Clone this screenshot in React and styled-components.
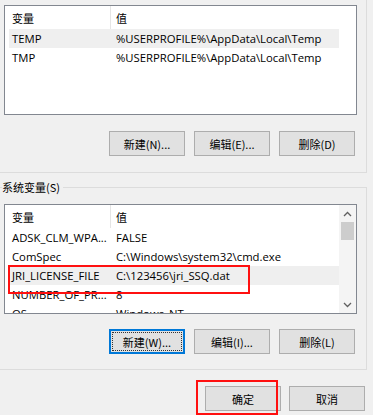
import React from "react";
import styled, { createGlobalStyle } from "styled-components";

const Global = createGlobalStyle`
  html, body { margin: 0; padding: 0; background: #f0f0f0; }
  body { overflow: hidden; }
`;

const cjk = '"Noto Sans CJK SC", sans-serif';

const Page = styled.div`
  position: relative;
  width: 373px;
  height: 415px;
  overflow: hidden;
  background: #f0f0f0;
  font-family: "Open Sans", "Noto Sans CJK SC", sans-serif;
  font-size: 11.3px;
  color: #000;
`;

const Group = styled.div`
  position: relative;
  box-sizing: border-box;
  width: 377px;
  margin-left: -10px;
  margin-top: ${(p) => p.$mt}px;
  padding: ${(p) => p.$pt}px 0 ${(p) => p.$pb}px 13px;
  border: 1px solid #dcdcdc;
`;

const GroupLabel = styled.div`
  position: absolute;
  left: 11px;
  top: -9px;
  padding-right: 3px;
  background: #f0f0f0;
  line-height: 16px;
  font-family: ${cjk};
  font-size: 11px;
`;

const ListBox = styled.div`
  position: relative;
  box-sizing: border-box;
  width: 353px;
  height: 110px;
  border: 1px solid #828790;
  background: #fff;
  padding: 0 0 0 4px;
  overflow: hidden;
  display: flex;
`;

const Rows = styled.div`
  width: 330px;
  display: flex;
  flex-direction: column;
`;

const Row = styled.div`
  display: flex;
  align-items: center;
  height: ${(p) => (p.$header ? 23 : 19)}px;
  background: ${(p) => (p.$sel ? "#efefef" : "transparent")};
  flex-shrink: 0;
  white-space: nowrap;
`;

const NameCell = styled.div`
  box-sizing: border-box;
  width: 102px;
  padding-left: 3px;
  align-self: stretch;
  display: flex;
  align-items: center;
  border-right: ${(p) => (p.$header ? "1px solid #e5e5e5" : "none")};
  font-family: ${(p) => (p.$header ? cjk : "inherit")};
  font-size: ${(p) => (p.$header ? "11px" : "inherit")};
`;

const ValueCell = styled.div`
  padding-left: 5px;
  font-family: ${(p) => (p.$header ? cjk : "inherit")};
  font-size: ${(p) => (p.$header ? "11px" : "inherit")};
`;

const ScrollTrack = styled.div`
  width: 17px;
  margin-left: auto;
  background: ${(p) => (p.$show ? "#f4f4f4" : "#fff")};
  display: flex;
  flex-direction: column;
  align-items: center;
`;

const Arrow = styled.div`
  height: 17px;
  width: 17px;
  display: flex;
  align-items: center;
  justify-content: center;
`;

const Thumb = styled.div`
  width: 13px;
  height: 18px;
  background: #cdcdcd;
`;

const Spacer = styled.div`
  flex: 1;
`;

const ButtonRow = styled.div`
  display: flex;
  gap: ${(p) => p.$gap}px;
  margin-top: ${(p) => p.$mt}px;
  padding-left: ${(p) => p.$pl}px;
`;

const Button = styled.div`
  position: relative;
  box-sizing: border-box;
  width: 76px;
  height: 25px;
  background: #e1e1e1;
  border: 1px solid ${(p) => (p.$focus ? "#0078d7" : "#adadad")};
  box-shadow: ${(p) => (p.$focus ? "inset 0 0 0 1px #0078d7" : "none")};
  display: flex;
  align-items: center;
  justify-content: center;
  font-family: ${cjk};
  font-size: 11px;
  &::after {
    content: "";
    display: ${(p) => (p.$focus ? "block" : "none")};
    position: absolute;
    inset: 2px;
    border: 1px dotted #333;
  }
`;

const Mark = styled.div`
  position: absolute;
  box-sizing: border-box;
  border: 2px solid #ff1010;
  pointer-events: none;
`;

const Chevron = ({ up }) => (
  <svg width="9" height="6" viewBox="0 0 9 6">
    <path
      d={up ? "M1 5 L4.5 1.5 L8 5" : "M1 1 L4.5 4.5 L8 1"}
      fill="none"
      stroke="#606060"
      strokeWidth="1.3"
    />
  </svg>
);

const userVars = [
  ["TEMP", "%USERPROFILE%\\AppData\\Local\\Temp", true],
  ["TMP", "%USERPROFILE%\\AppData\\Local\\Temp", false],
];

const sysVars = [
  ["ADSK_CLM_WPA...", "FALSE", false],
  ["ComSpec", "C:\\Windows\\system32\\cmd.exe", false],
  ["JRI_LICENSE_FILE", "C:\\123456\\jri_SSQ.dat", true],
  ["NUMBER_OF_PR...", "8", false],
  ["OS", "Windows_NT", false],
];

function VarList({ items, scroll }) {
  return (
    <ListBox>
      <Rows>
        <Row $header>
          <NameCell $header>变量</NameCell>
          <ValueCell $header>值</ValueCell>
        </Row>
        {items.map(([n, v, sel]) => (
          <Row key={n} $sel={sel}>
            <NameCell>{n}</NameCell>
            <ValueCell>{v}</ValueCell>
          </Row>
        ))}
      </Rows>
      <ScrollTrack $show={scroll}>
        {scroll && (
          <>
            <Arrow>
              <Chevron up />
            </Arrow>
            <Thumb />
            <Spacer />
            <Arrow>
              <Chevron />
            </Arrow>
          </>
        )}
      </ScrollTrack>
    </ListBox>
  );
}

export default function App() {
  return (
    <Page>
      <Global />
      <Group $mt={-20} $pt={24} $pb={16}>
        <VarList items={userVars} />
        <ButtonRow $mt={16} $pl={105} $gap={9}>
          <Button>新建(N)...</Button>
          <Button>编辑(E)...</Button>
          <Button>删除(D)</Button>
        </ButtonRow>
      </Group>
      <Group $mt={14} $pt={16} $pb={15}>
        <GroupLabel>系统变量(S)</GroupLabel>
        <VarList items={sysVars} scroll />
        <ButtonRow $mt={15} $pl={105} $gap={9}>
          <Button $focus>新建(W)...</Button>
          <Button>编辑(I)...</Button>
          <Button>删除(L)</Button>
        </ButtonRow>
      </Group>
      <ButtonRow $mt={16} $pl={205} $gap={8}>
        <Button>确定</Button>
        <Button>取消</Button>
      </ButtonRow>
      <Mark style={{ left: 8, top: 265, width: 242, height: 29 }} />
      <Mark style={{ left: 196, top: 380, width: 82, height: 35 }} />
    </Page>
  );
}
